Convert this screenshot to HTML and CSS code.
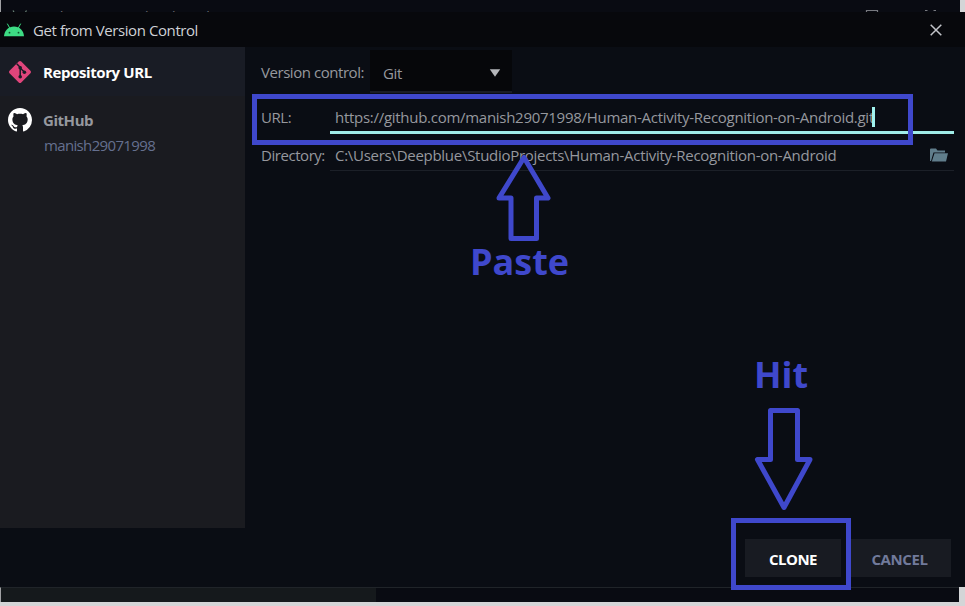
FILE: index.html
```
<!DOCTYPE html>
<html lang="en">
<head>
<meta charset="utf-8">
<title>Get from Version Control</title>
<link rel="stylesheet" href="styles.css">
</head>
<body>
<div class="behind-top">
  <svg class="behind-logo" width="30" height="12" viewBox="0 0 30 12"><path d="M12 10.500l1 1.500M25.500 10.500l-1 1.500" stroke="#6b8577" stroke-width="1.200"/></svg>
  <div class="behind-title">Welcome to Android Studio</div>
  <svg class="behind-controls" width="90" height="12" viewBox="0 0 90 12"><path d="M1.500 12V10.500h11V12M60 10.500h2.500M68.500 10.500h2.500" fill="none" stroke="#77797f" stroke-width="1.200"/></svg>
</div>
<main class="dialog">
  <header class="titlebar">
    <svg class="android" width="22" height="14" viewBox="0 0 22 14"><path d="M4.500 1l2.200 4M17.500 1l-2.200 4" stroke="#3ddc84" stroke-width="1" stroke-linecap="round"/><path d="M1 13.200C1.300 7.500 5.500 3.500 11 3.500s9.700 4 10 9.700z" fill="#3ddc84"/><circle cx="6.500" cy="9.700" r=".9" fill="#12502f"/><circle cx="15.500" cy="9.700" r=".9" fill="#12502f"/></svg>
    <h1>Get from Version Control</h1>
    <svg class="close" width="12" height="12" viewBox="0 0 12 12"><path d="M.7.7l10.600 10.600M11.300.7L.7 11.300" stroke="#c3c5ca" stroke-width="1.500"/></svg>
  </header>
  <div class="content">
    <nav class="sidebar">
      <div class="source selected">
        <svg width="24" height="24" viewBox="0 0 24 24"><rect x="3.700" y="3.700" width="16.600" height="16.600" rx="1.800" transform="rotate(45 12 12)" fill="#e0457b"/><path d="M8.700 3.700l3.500 3.600v9.200M12.200 8l4.300 4.200" fill="none" stroke="#191c25" stroke-width="1.500"/><circle cx="12.200" cy="7.800" r="1.800" fill="#191c25"/><circle cx="12.200" cy="16.800" r="1.800" fill="#191c25"/><circle cx="16.400" cy="12.200" r="1.800" fill="#191c25"/></svg>
        <span class="repo">Repository URL</span>
      </div>
      <div class="source github">
        <svg width="24" height="24" viewBox="0 0 16 16"><path fill="#fff" d="M8 0C3.580 0 0 3.580 0 8c0 3.540 2.290 6.530 5.470 7.590.4.070.55-.17.55-.38 0-.19-.01-.82-.01-1.490-2.010.37-2.530-.49-2.690-.94-.09-.23-.48-.94-.82-1.130-.28-.15-.68-.52-.01-.53.63-.01 1.080.58 1.230.82.72 1.210 1.870.87 2.330.66.070-.52.28-.87.51-1.070-1.780-.2-3.640-.89-3.640-3.950 0-.87.31-1.590.82-2.150-.08-.2-.36-1.020.08-2.120 0 0 .67-.21 2.200.82.64-.18 1.320-.27 2-.27s1.360.09 2 .27c1.530-1.040 2.200-.82 2.200-.82.44 1.100.16 1.920.08 2.120.51.56.82 1.270.82 2.150 0 3.070-1.870 3.750-3.650 3.950.29.25.54.73.54 1.480 0 1.070-.01 1.930-.01 2.200 0 .21.15.46.55.38A8.010 8.010 0 0 0 16 8c0-4.420-3.580-8-8-8z"/></svg>
        <span class="provider">GitHub</span>
      </div>
      <div class="account">manish29071998</div>
    </nav>
    <section class="form">
      <div class="row vcs">
        <label class="vcs-label">Version control:</label>
        <div class="select"><span>Git</span><svg width="12" height="8" viewBox="0 0 12 8"><path d="M.8.3h10.400L6 7.800z" fill="#b5b7bb"/></svg></div>
      </div>
      <div class="row url">
        <label class="url-label">URL:</label>
        <div class="field focused"><span class="url-text">https://github.com/manish29071998/Human-Activity-Recognition-on-Android.git</span><i class="caret"></i></div>
      </div>
      <div class="row directory">
        <label class="dir-label">Directory:</label>
        <div class="field dir-field"><span class="dir-text">C:\Users\Deepblue\StudioProjects\Human-Activity-Recognition-on-Android</span>
          <svg class="folder" width="18" height="14" viewBox="0 0 18 14"><path d="M0 13V1.500Q0 .5 1 .5h5l1.500 2H15v2H3.500L1 13z" fill="#607d8b"/><path d="M4.500 5.200H18L16 13.500H1.800z" fill="#607d8b"/></svg>
        </div>
      </div>
    </section>
  </div>
  <footer class="actions">
    <div class="button clone"><span>CLONE</span></div>
    <div class="button cancel"><span>CANCEL</span></div>
  </footer>
</main>
<div class="behind-bottom"><div class="behind-panel"></div></div>
<div class="mark mark-url"></div>
<div class="mark mark-clone"></div>
<svg class="arrow arrow-up" width="60" height="96" viewBox="0 0 60 96"><path d="M30 7.500L54 48H42.500V88.500H17V48H5z"/></svg>
<div class="note paste">Paste</div>
<div class="note hit">Hit</div>
<svg class="arrow arrow-down" width="64" height="110" viewBox="0 0 64 110"><path d="M18.500 5.500h27v49H58L32 102.500 5.500 54.500H18.500z"/></svg>
</body>
</html>
```
FILE: styles.css
```
* { box-sizing: border-box; }
body {
  margin: 0;
  width: 965px;
  height: 606px;
  overflow: hidden;
  position: relative;
  display: flex;
  flex-direction: column;
  background: #d4d5d7;
  color: #96989e;
  font: 15px/20px "Open Sans", "Noto Sans", sans-serif;
}
span, h1, label { white-space: nowrap; }
svg { flex: none; display: block; }
.behind-top {
  height: 12px;
  width: 960px;
  flex: none;
  overflow: hidden;
  display: flex;
  background: #090b12;
  border-left: 1px solid #a0a1a4;
}
.behind-title { padding: 6px 0 0 7px; height: 12px; overflow: hidden; color: #66686e; letter-spacing: -.3px; }
.behind-controls { margin: 0 5px 0 auto; }
.dialog {
  height: 575px;
  flex: none;
  background: #0a0d14;
  display: flex;
  flex-direction: column;
}
.titlebar {
  height: 35px;
  flex: none;
  display: flex;
  align-items: center;
  padding: 1px 23px 0 3px;
  background: #07080c;
}
.android { margin-right: 8px; }
h1 { margin: 0; padding-bottom: 1px; font-size: 15px; font-weight: 400; letter-spacing: -.42px; color: #cfd1d6; }
.close { margin-left: auto; }
.content { height: 481px; flex: none; display: flex; }
.sidebar { width: 245px; flex: none; background: #1a1b20; }
.source { height: 49px; padding: 1px 9px 0; display: flex; align-items: center; gap: 10px; font-weight: 700; }
.selected { padding-left: 8px; gap: 11px; background: #191c25; color: #fff; }
.github { height: 48px; padding: 0 8px 1px; gap: 11px; }
.repo { letter-spacing: -.4px; }
.provider { letter-spacing: -.45px; }
.account { padding: 0 0 0 44px; margin-top: -9px; color: #65708f; letter-spacing: -.65px; line-height: 20px; }
.form { flex: 1; padding: 3px 11px 0 16px; }
.row { display: flex; align-items: center; }
.row label { width: 69px; flex: none; letter-spacing: -.45px; }
.row .vcs-label { width: 109px; }
.url-label { padding-top: 7px; }
.dir-label { padding-top: 5px; }
.select {
  width: 142px;
  height: 43px;
  display: flex;
  align-items: center;
  justify-content: space-between;
  padding: 4px 11px 0 13px;
  background: #06070a;
  border-bottom: 2px solid #1a1d25;
  letter-spacing: -.3px;
}
.url { height: 41px; }
.field {
  flex: 1;
  height: 37px;
  padding: 0 6px 0 5px;
  display: flex;
  align-items: center;
  border-bottom: 1px solid #1c2028;
}
.focused { align-self: flex-end; height: 33px; padding-top: 1px; border-bottom: 3px solid #a0ece8; }
.dir-field { padding-top: 5px; }
.url-text, .dir-text { letter-spacing: -.28px; }
.caret { width: 3px; height: 20px; margin-left: -2px; background: #a0f2ee; }
.folder { margin-left: auto; }
.actions { flex: 1; display: flex; justify-content: flex-end; align-items: flex-start; gap: 7px; padding: 11px 14px 0 0; }
.button { height: 38px; display: flex; align-items: center; justify-content: center; padding-top: 1px; background: #181b22; font-weight: 700; letter-spacing: -.5px; }
.clone { width: 96px; color: #fff; }
.cancel { width: 103px; letter-spacing: -.4px; color: #717a9b; }
.behind-bottom { height: 15px; width: 959px; flex: none; background: #090b12; border-top: 1px solid #202429; border-left: 1px solid #a0a1a4; }
.behind-panel { width: 375px; height: 14px; background: #15191c; }
.mark { position: absolute; border: 5px solid #3f48cc; }
.mark-url { left: 252px; top: 94px; width: 661px; height: 51px; }
.mark-clone { left: 731px; top: 518px; width: 120px; height: 72px; }
.arrow { position: absolute; fill: none; stroke: #3f48cc; stroke-width: 5; stroke-linejoin: round; }
.arrow-up { left: 494px; top: 150px; }
.arrow-down { left: 752px; top: 405px; }
.note { position: absolute; color: #3f48cc; font: 700 36px/44px "Open Sans", "Noto Sans", sans-serif; }
.paste { left: 470px; top: 240px; }
.hit { left: 754px; top: 353px; }
```
